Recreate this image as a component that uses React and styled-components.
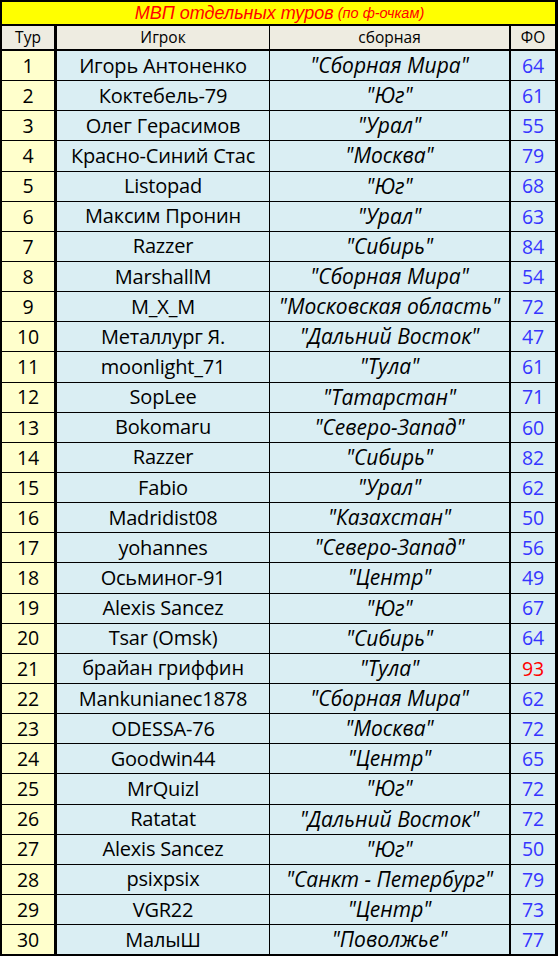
import React from "react";
import styled, { createGlobalStyle } from "styled-components";

const GlobalStyle = createGlobalStyle`
  html, body {
    margin: 0;
    padding: 0;
    background: #ffffff;
  }
`;

const rows = [
  [1, "Игорь Антоненко", "Сборная Мира", 64],
  [2, "Коктебель-79", "Юг", 61],
  [3, "Олег Герасимов", "Урал", 55],
  [4, "Красно-Синий Стас", "Москва", 79],
  [5, "Listopad", "Юг", 68],
  [6, "Максим Пронин", "Урал", 63],
  [7, "Razzer", "Сибирь", 84],
  [8, "MarshallM", "Сборная Мира", 54],
  [9, "M_X_M", "Московская область", 72],
  [10, "Металлург Я.", "Дальний Восток", 47],
  [11, "moonlight_71", "Тула", 61],
  [12, "SopLee", "Татарстан", 71],
  [13, "Bokomaru", "Северо-Запад", 60],
  [14, "Razzer", "Сибирь", 82],
  [15, "Fabio", "Урал", 62],
  [16, "Madridist08", "Казахстан", 50],
  [17, "yohannes", "Северо-Запад", 56],
  [18, "Осьминог-91", "Центр", 49],
  [19, "Alexis Sancez", "Юг", 67],
  [20, "Tsar (Omsk)", "Сибирь", 64],
  [21, "брайан гриффин", "Тула", 93],
  [22, "Mankunianec1878", "Сборная Мира", 62],
  [23, "ODESSA-76", "Москва", 72],
  [24, "Goodwin44", "Центр", 65],
  [25, "MrQuizl", "Юг", 72],
  [26, "Ratatat", "Дальний Восток", 72],
  [27, "Alexis Sancez", "Юг", 50],
  [28, "psixpsix", "Санкт - Петербург", 79],
  [29, "VGR22", "Центр", 73],
  [30, "МалыШ", "Поволжье", 77],
];

const Sheet = styled.div`
  box-sizing: border-box;
  width: 558px;
  height: 956px;
  border-style: solid;
  border-color: #000;
  border-width: 2px 3px 2px 2px;
  display: flex;
  flex-direction: column;
  background: #000;
  font-family: "Open Sans", "Noto Sans", sans-serif;
`;

const Title = styled.div`
  height: 22px;
  flex: none;
  border-bottom: 2px solid #000;
  background: #ffff00;
  color: #ff0000;
  font-family: "Liberation Sans", Arial, sans-serif;
  font-style: italic;
  display: flex;
  align-items: center;
  justify-content: center;
  gap: 4px;
  font-size: 18px;
  padding-left: 2px;
`;

const TitleNote = styled.span`
  font-size: 14.5px;
`;

const Row = styled.div`
  display: grid;
  grid-template-columns: 55px 213px 241px 44px;
  flex: ${(p) => (p.$head ? "none" : "1 1 0")};
  height: ${(p) => (p.$head ? "23px" : "auto")};
  border-bottom: ${(p) => (p.$last ? "none" : p.$head ? "2px solid #000" : "1px solid #000")};
  min-height: 0;
`;

const borders = ["3px", "1px", "2px", "0"];

const Cell = styled.div`
  display: flex;
  align-items: center;
  justify-content: center;
  white-space: nowrap;
  overflow: hidden;
  border-right: ${(p) => borders[p.$col]} solid #000;
  background: ${(p) => (p.$head ? "#eeece1" : p.$col === 0 ? "#ffffcc" : "#daeef3")};
  color: #000;
  font-size: ${(p) => (p.$head ? "15.5px" : "19.5px")};
  line-height: 1;
  padding-top: ${(p) => (p.$head ? "1px" : "0")};
  letter-spacing: ${(p) => (p.$head ? "0" : "-0.2px")};
`;

const Player = styled(Cell)`
  font-size: ${(p) => (p.$head ? "15.5px" : "20px")};
`;

const Team = styled(Cell)`
  font-style: italic;
  font-size: 21px;
  letter-spacing: 0;
`;

const Score = styled(Cell)`
  color: ${(p) => (p.$hot ? "#ff0000" : "#3535ff")};
  font-size: 19.5px;
`;

export default function App() {
  return (
    <>
      <GlobalStyle />
      <Sheet>
        <Title>
          <span>МВП отдельных туров</span>
          <TitleNote>(по ф-очкам)</TitleNote>
        </Title>
        <Row $head>
          <Cell $head $col={0}>Тур</Cell>
          <Player $head $col={1}>Игрок</Player>
          <Cell $head $col={2}>сборная</Cell>
          <Cell $head $col={3}>ФО</Cell>
        </Row>
        {rows.map(([n, player, team, score], i) => (
          <Row key={n} $last={i === rows.length - 1}>
            <Cell $col={0}>{n}</Cell>
            <Player $col={1}>{player}</Player>
            <Team $col={2}>"{team}"</Team>
            <Score $col={3} $hot={score === 93}>{score}</Score>
          </Row>
        ))}
      </Sheet>
    </>
  );
}
